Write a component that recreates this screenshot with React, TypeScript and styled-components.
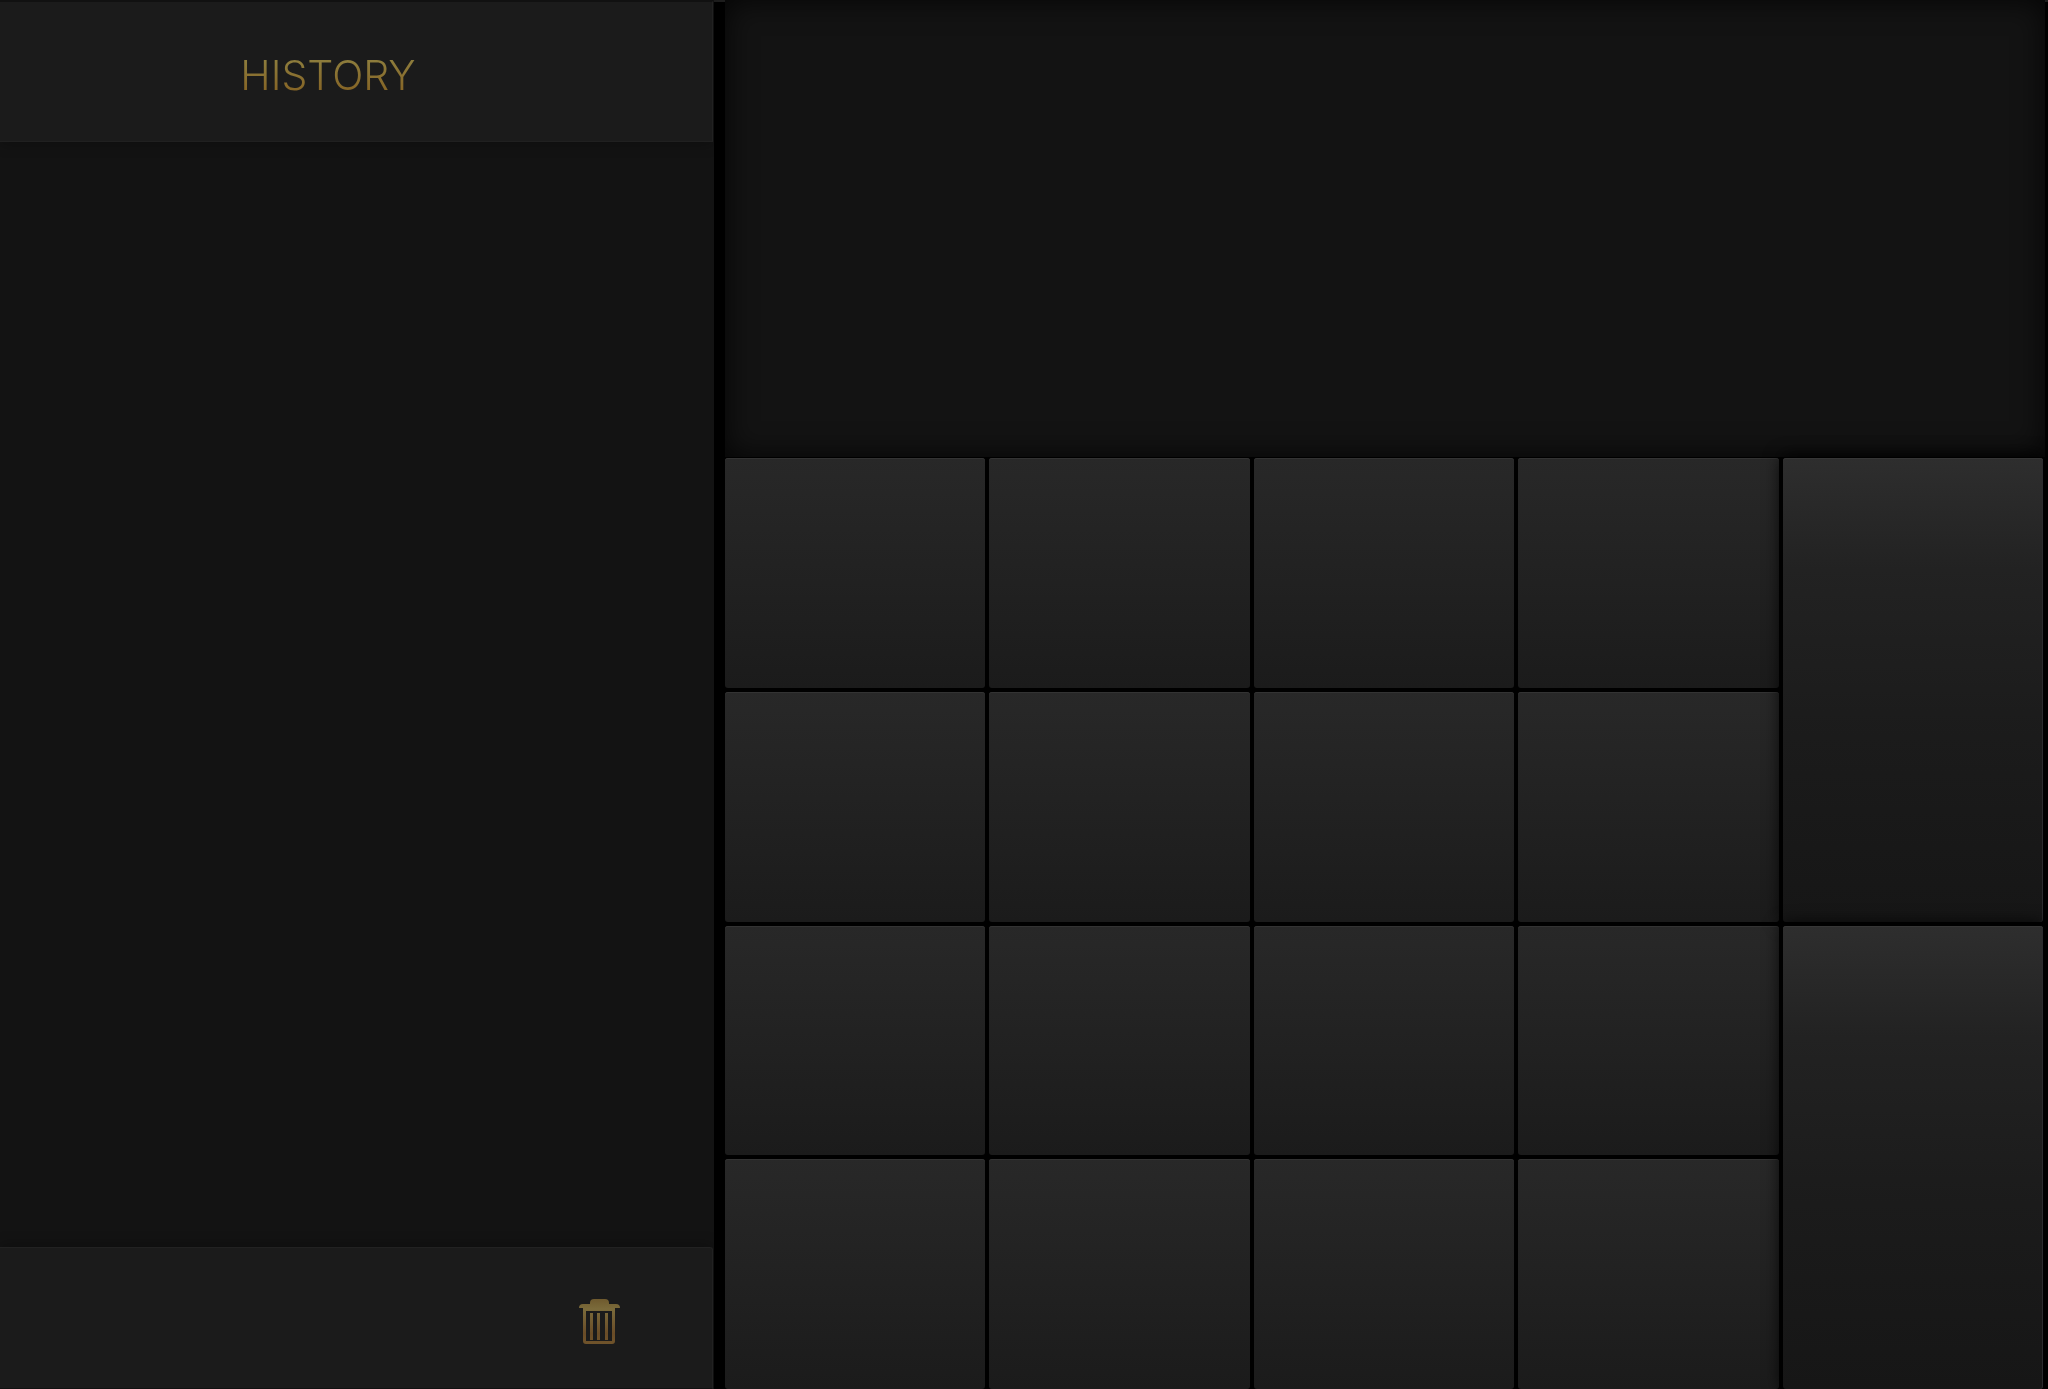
import React from "react";
import styled, { createGlobalStyle } from "styled-components";

const GlobalStyle = createGlobalStyle`
  * { box-sizing: border-box; }
  html, body, #root { height: 100%; margin: 0; }
  body {
    background: #000;
    font-family: Inter, "Liberation Sans", sans-serif;
    overflow: hidden;
  }
`;

const Calculator = styled.main`
  display: grid;
  grid-template-columns: minmax(0, 714fr) minmax(0, 1320fr);
  column-gap: 11px;
  height: 100vh;
  padding-right: 3px;
  background: linear-gradient(#1e1e1e 2px, #000 2px);
`;

const History = styled.aside`
  display: flex;
  flex-direction: column;
  padding-right: 1px;
  background: #131313;
`;

const Bar = styled.div`
  display: flex;
  align-items: center;
  flex: none;
  background: #1b1b1b;
  border-right: 1px solid #222;
  border-top-right-radius: 3px;
  padding-right: 56px;
`;

const HistoryHeader = styled(Bar).attrs({ as: "header" })`
  height: 142px;
  justify-content: center;
  border-top: 2px solid #111;
  border-bottom: 1px solid #202020;
  box-shadow: 0 2px 14px rgba(0, 0, 0, 0.3);
  padding-top: 6px;
`;

const HistoryFooter = styled(Bar).attrs({ as: "footer" })`
  height: 142px;
  justify-content: flex-end;
  border-top: 1px solid #222;
  border-bottom: 1px solid #111;
  box-shadow: 0 -2px 14px rgba(0, 0, 0, 0.3);
  padding-top: 8px;
`;

const Title = styled.h1`
  margin: 0;
  font-size: 41px;
  line-height: 48px;
  font-weight: 300;
  text-transform: uppercase;
  color: transparent;
  background: linear-gradient(#8d7c3c 20%, #866627 80%);
  background-clip: text;
`;

const Entries = styled.ol`
  flex: 1;
  margin: 0;
  padding: 0;
  list-style: none;
`;

const ClearButton = styled.button`
  display: flex;
  margin: 0 20px;
  padding: 16px;
  border: 0;
  background: none;
  cursor: pointer;
`;

const Keyboard = styled.section`
  display: grid;
  grid-template-rows: minmax(0, 457fr) minmax(0, 931fr);
  row-gap: 1px;
`;

const Display = styled.output`
  display: block;
  background: #131313;
  box-shadow: inset 0 0 30px rgba(0, 0, 0, 0.8);
`;

const Keys = styled.div`
  display: grid;
  grid-template-columns: repeat(5, minmax(0, 1fr));
  grid-template-rows: repeat(4, minmax(0, 1fr));
  grid-auto-flow: row dense;
  gap: 4px;
  padding-right: 2px;
  background: #000;
`;

const Key = styled.button<{ $tall?: boolean }>`
  grid-column: ${(p) => (p.$tall ? "5" : "auto")};
  grid-row: span ${(p) => (p.$tall ? 2 : 1)};
  z-index: ${(p) => (p.$tall ? 1 : 0)};
  margin: 0;
  padding: 0;
  border: 0;
  border-radius: 3px;
  cursor: pointer;
  background: ${(p) =>
    p.$tall
      ? "linear-gradient(#2e2e2e, #222 24%, #1b1b1b 60%, #161616)"
      : "linear-gradient(#282828, #1b1b1b)"};
  box-shadow: ${(p) =>
    p.$tall
      ? "inset 0 1px #363636, inset -1px 0 #2b2b2e, 0 0 18px 1px #000"
      : "inset 0 1px #333"};
`;

const rows = [
  ["7", "8", "9", "Divide"],
  ["4", "5", "6", "Multiply"],
  ["1", "2", "3", "Subtract"],
  ["0", "Decimal point", "Percent", "Add"],
];

const tallKeys: Record<number, string> = { 0: "Clear", 2: "Equals" };

function TrashIcon() {
  return (
    <svg width="41" height="46" viewBox="0 0 41 46" aria-hidden="true">
      <defs>
        <linearGradient id="brass" x1="0" y1="0" x2="0" y2="46" gradientUnits="userSpaceOnUse">
          <stop offset="0" stopColor="#6f5a2e" />
          <stop offset="0.22" stopColor="#7b6b3b" />
          <stop offset="0.75" stopColor="#6a4c27" />
          <stop offset="1" stopColor="#70542b" />
        </linearGradient>
      </defs>
      <g fill="url(#brass)">
        <path d="M11 5V4Q11 0 15 0H26Q30 0 30 4V5H37Q41 5 41 9H0Q0 5 4 5Z" />
        <path
          fillRule="evenodd"
          d="M4 9H36V42Q36 45 33 45H7Q4 45 4 42ZM7 12V42H33V12Z"
        />
        <path d="M11 14h3v27h-3zM18 14h3v27h-3zM26 14h3v27h-3z" />
      </g>
    </svg>
  );
}

export default function App() {
  return (
    <>
      <GlobalStyle />
      <Calculator>
        <History>
          <HistoryHeader>
            <Title>History</Title>
          </HistoryHeader>
          <Entries />
          <HistoryFooter>
            <ClearButton type="button" aria-label="Clear history">
              <TrashIcon />
            </ClearButton>
          </HistoryFooter>
        </History>
        <Keyboard>
          <Display aria-label="Result" />
          <Keys>
            {rows.map((row, index) => (
              <React.Fragment key={index}>
                {row.map((name) => (
                  <Key key={name} type="button" aria-label={name} />
                ))}
                {tallKeys[index] && (
                  <Key $tall type="button" aria-label={tallKeys[index]} />
                )}
              </React.Fragment>
            ))}
          </Keys>
        </Keyboard>
      </Calculator>
    </>
  );
}
